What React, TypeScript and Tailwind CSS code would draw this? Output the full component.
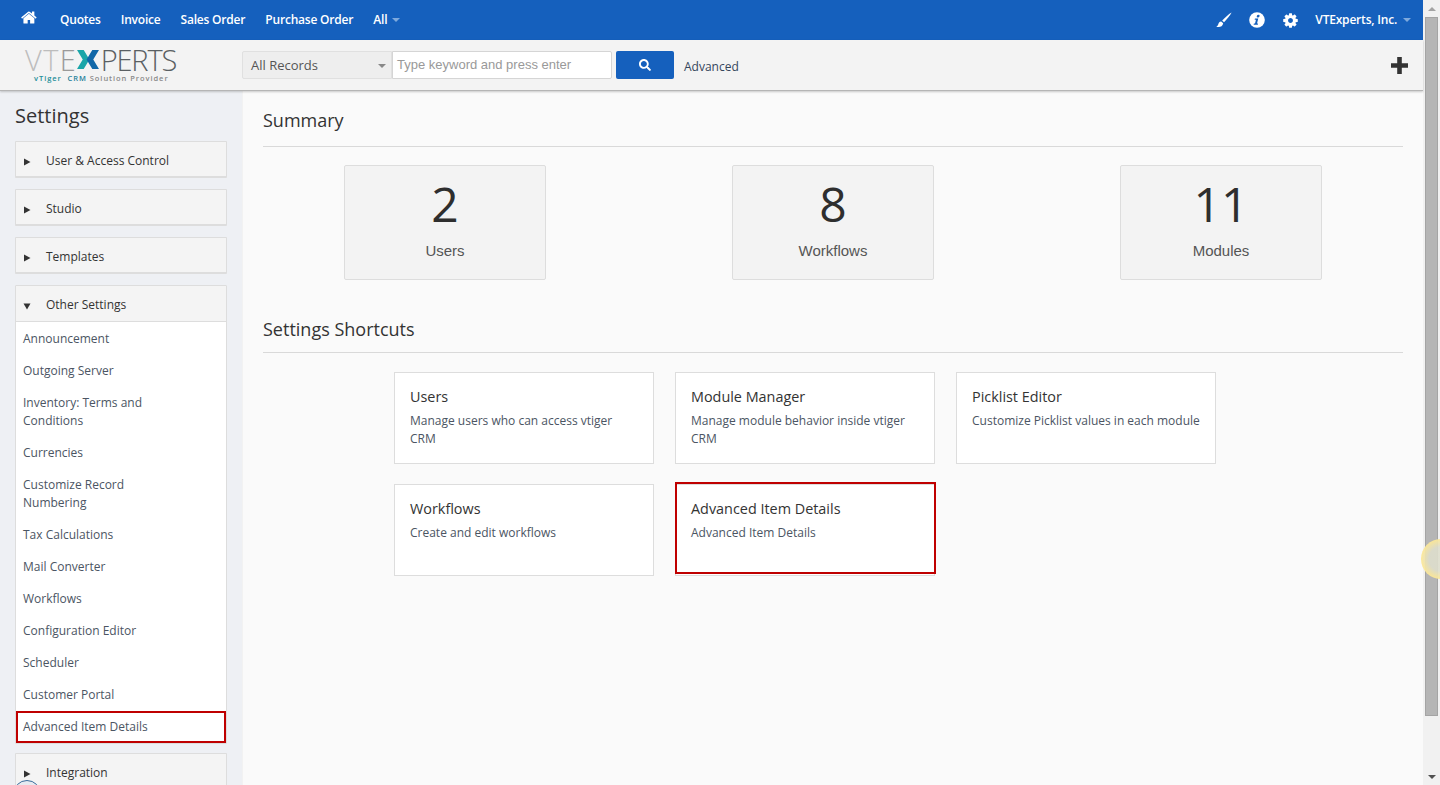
import { FaSearch } from 'react-icons/fa';

const navLinks = ['Quotes', 'Invoice', 'Sales Order', 'Purchase Order'];
const closedTop = ['User & Access Control', 'Studio', 'Templates'];
const otherSettings = [
  'Announcement',
  'Outgoing Server',
  'Inventory: Terms and Conditions',
  'Currencies',
  'Customize Record Numbering',
  'Tax Calculations',
  'Mail Converter',
  'Workflows',
  'Configuration Editor',
  'Scheduler',
  'Customer Portal',
];
const summary = [
  { n: '2', label: 'Users' },
  { n: '8', label: 'Workflows' },
  { n: '11', label: 'Modules' },
];
const shortcuts = [
  { title: 'Users', text: 'Manage users who can access vtiger CRM' },
  { title: 'Module Manager', text: 'Manage module behavior inside vtiger CRM' },
  { title: 'Picklist Editor', text: 'Customize Picklist values in each module' },
  { title: 'Workflows', text: 'Create and edit workflows' },
  { title: 'Advanced Item Details', text: 'Advanced Item Details' },
];

function Caret({ className }: { className: string }) {
  return <span className={`inline-block w-0 h-0 border-x-[4px] border-x-transparent border-t-[4px] ${className}`} />;
}

function HomeIcon() {
  return (
    <svg width="17" height="17" viewBox="0 0 1792 1792" fill="currentColor" className="ml-[21px] mb-[5px]">
      <path d="M1408 992v480q0 26-19 45t-45 19h-384v-384h-256v384h-384q-26 0-45-19t-19-45v-480q0-1 .5-3t.5-3l575-474 575 474q1 2 1 6zm223-69l-62 74q-8 9-21 11h-3q-13 0-21-7l-692-577-692 577q-12 8-24 7-13-2-21-11l-62-74q-8-10-7-23.5t11-21.5l719-599q32-26 76-26t76 26l244 204v-195q0-14 9-23t23-9h192q14 0 23 9t9 23v408l219 182q10 8 11 21.5t-7 23.5z" />
    </svg>
  );
}

function BrushIcon() {
  return (
    <svg width="16" height="16" viewBox="0 0 16 16" fill="currentColor" className="mr-[17px]">
      <path d="M15.6 0.4 C12.5 2.2 8.6 5.6 6.2 8.6 L8 10.2 C10.6 7.6 14 3.6 15.6 0.4 Z" />
      <path d="M5.2 9.4 C3.2 9.6 2.6 11 2.2 12.4 C1.9 13.4 1.2 14 0.2 14.4 C2.4 15.6 6.6 15.2 7.2 11.2 Z" />
    </svg>
  );
}

function InfoIcon() {
  return (
    <svg width="16" height="16" viewBox="0 0 16 16" className="mr-[17px]">
      <circle cx="8" cy="8" r="7.8" fill="#ffffff" />
      <g fill="#1560bd" transform="skewX(-14) translate(2 0)">
        <circle cx="8.2" cy="4.2" r="1.4" />
        <path d="M5.6 6.6 H8.9 V11.6 H10 V12.8 H5.8 V11.6 H6.9 V7.8 H5.6 Z" />
      </g>
    </svg>
  );
}

function CogIcon() {
  return (
    <svg width="17" height="17" viewBox="0 0 1792 1792" fill="currentColor" className="mr-[16px]">
      <path d="M1152 896q0-106-75-181t-181-75-181 75-75 181 75 181 181 75 181-75 75-181zm512-109v222q0 12-8 23t-20 13l-185 28q-19 54-39 91 35 50 107 138 10 12 10 25t-9 23q-27 37-99 108t-94 71q-12 0-26-9l-138-108q-44 23-91 38-16 136-29 186-7 28-36 28h-222q-14 0-24.5-8.5t-11.5-21.5l-28-184q-49-16-90-37l-141 107q-10 9-25 9-14 0-25-11-126-114-165-168-7-10-7-23 0-12 8-23 15-21 51-66.5t54-70.5q-27-50-41-99l-183-27q-13-2-21-12.5t-8-23.5v-222q0-12 8-23t19-13l186-28q14-46 39-92-40-57-107-138-10-12-10-24 0-10 9-23 26-36 98.5-107.5t94.5-71.5q13 0 26 10l138 107q44-23 91-38 16-136 29-186 7-28 36-28h222q14 0 24.5 8.5t11.5 21.5l28 184q49 16 90 37l142-107q9-9 24-9 13 0 25 10 129 119 165 170 7 8 7 22 0 12-8 23-15 21-51 66.5t-54 70.5q26 50 41 98l183 28q13 2 21 12.5t8 23.5z" />
    </svg>
  );
}

function AccordionHead({ label, open }: { label: string; open?: boolean }) {
  return (
    <div className={`flex items-center bg-[#f4f4f4] text-[12px] text-[#333333] ${open ? 'h-[35px] pt-[2px]' : 'h-[34px] pt-[3px]'}`}>
      <span className="w-[8px] ml-[7px] mr-[15px] mt-[3px]">
        {open ? (
          <svg width="8" height="8" viewBox="0 0 8 8"><path d="M0.5 1.5 H7.5 L4 7.5 Z" fill="#333" /></svg>
        ) : (
          <svg width="8" height="8" viewBox="0 0 8 8"><path d="M1 0.5 L7.5 4 L1 7.5 Z" fill="#333" /></svg>
        )}
      </span>
      <span>{label}</span>
    </div>
  );
}

function Logo() {
  return (
    <div className="w-[153px] ml-[25px] flex flex-col">
      <div className="flex items-center h-[25px] text-[29px] leading-[25px] font-light">
        <span className="text-[#bdbdbd] tracking-[1.4px]">VT</span>
        <span className="text-[#9a9a9a] tracking-[0px]">E</span>
        <svg width="24" height="21" viewBox="0 0 23 22" className="shrink-0">
          <polygon points="0,1 7,1 13,11 7,21 0,21 6,11" fill="#1aa5a8" />
          <polygon points="23,1 16,1 10,11 16,21 23,21 17,11" fill="#1268a8" />
        </svg>
        <span className="text-[#5a5f63] tracking-[-1.2px] ml-[1px]">PERTS</span>
      </div>
      <div className="mt-[1px] pl-[9px] text-[7.5px] leading-[10px] font-semibold tracking-[0.95px] whitespace-nowrap">
        <span className="text-[#1d8f99]">vTiger</span>
        <span className="text-[#1d7f99]"> &nbsp;CRM</span>
        <span className="text-[#8a8a8a]"> Solution Provider</span>
      </div>
    </div>
  );
}

export default function App() {
  return (
    <div className="relative flex h-[785px] w-[1440px] overflow-hidden bg-[#fafafa] font-['Open_Sans',sans-serif] text-[#333333]">
      <div className="flex flex-col w-[1423px] h-full">
        {/* top nav */}
        <div className="flex items-center h-[40px] shrink-0 bg-[#1560bd] text-white text-[12px] font-semibold tracking-[-0.2px]">
          <HomeIcon />
          <div className="flex items-center gap-[20px] ml-[22px]">
            {navLinks.map((l) => (
              <span key={l}>{l}</span>
            ))}
            <span className="flex items-center gap-[5px]">
              All
              <Caret className="border-t-[#7ea9dd]" />
            </span>
          </div>
          <div className="flex items-center ml-auto mr-[12px]">
            <BrushIcon />
            <InfoIcon />
            <CogIcon />
            <span className="flex items-center gap-[6px]">
              VTExperts, Inc.
              <Caret className="border-t-[#7ea9dd]" />
            </span>
          </div>
        </div>

        {/* search bar */}
        <div className="relative z-10 flex items-center h-[51px] shrink-0 bg-[#f3f3f3] border-b border-[#b5b5b5] shadow-[0_1px_2px_rgba(0,0,0,0.2)]">
          <Logo />
          <div className="flex items-center ml-[64px] h-[28px] w-[150px] bg-[#eeeeee] border border-[#e0e0e0] rounded-l-[2px] text-[13px] text-[#555555] pl-[8px] pr-[5px] pt-[1px]">
            <span>All Records</span>
            <Caret className="ml-auto border-t-[#888888]" />
          </div>
          <div className="flex items-center h-[28px] w-[220px] bg-white border border-[#d5d5d5] rounded-r-[2px] pl-[4px] text-[13px] text-[#999999] font-['Liberation_Sans',sans-serif]">
            Type keyword and press enter
          </div>
          <div className="flex items-center justify-center ml-[4px] h-[28px] w-[58px] bg-[#1560bd] rounded-[2px] text-white">
            <FaSearch className="text-[12px]" />
          </div>
          <span className="ml-[10px] mt-[3px] text-[12px] text-[#35465c]">Advanced</span>
          <svg width="17" height="17" viewBox="0 0 17 17" fill="#333333" className="ml-auto mr-[15px]">
            <path d="M6.2 0 H10.8 V6.2 H17 V10.8 H10.8 V17 H6.2 V10.8 H0 V6.2 H6.2 Z" />
          </svg>
        </div>

        <div className="flex flex-1 min-h-0">
          {/* sidebar */}
          <div className="w-[243px] shrink-0 bg-[#eef0f4] border-r border-[#f2f2f2] pl-[15px] pr-[15px] overflow-hidden">
            <div className="mt-[10px] h-[30px] text-[20px] leading-[30px] text-[#333333]">Settings</div>
            <div className="flex flex-col gap-[11px] mt-[10px]">
              {closedTop.map((t) => (
                <div key={t} className="border border-[#dddddd] border-b-[2px] rounded-[1px]">
                  <AccordionHead label={t} />
                </div>
              ))}
              <div className="border border-[#dddddd] rounded-[1px]">
                <div className="border-b border-[#dddddd]">
                  <AccordionHead label="Other Settings" open />
                </div>
                <div className="flex flex-col bg-white text-[12px] leading-[18px] text-[#4b5563]">
                  {otherSettings.map((s) => (
                    <div key={s} className="pl-[7px] pr-[50px] pt-[8px] pb-[6px]">
                      {s}
                    </div>
                  ))}
                  <div className="mt-[1px] pl-[5px] py-[5px] border-[2px] border-[#bf0000]">Advanced Item Details</div>
                </div>
              </div>
              <div className="border border-[#dddddd] border-b-[2px] rounded-[1px] -mt-[2px]">
                <AccordionHead label="Integration" />
              </div>
            </div>
          </div>

          {/* main */}
          <div className="flex-1 px-[20px] overflow-hidden">
            <div className="mt-[14px] h-[30px] text-[18px] leading-[30px] text-[#333333]">Summary</div>
            <div className="mt-[11px] border-b border-[#d9d9d9]" />
            <div className="flex gap-[186px] pl-[81px] mt-[18px]">
              {summary.map((c) => (
                <div key={c.label} className="flex flex-col items-center w-[202px] h-[115px] bg-[#f3f3f3] border border-[#dddddd] rounded-[2px]">
                  <div className="mt-[8px] h-[60px] text-[48px] leading-[60px] font-medium text-[#2e2e2e]">{c.n}</div>
                  <div className="mt-[7px] text-[15px] leading-[20px] text-[#555555] font-['Liberation_Sans',sans-serif]">{c.label}</div>
                </div>
              ))}
            </div>
            <div className="mt-[34px] h-[30px] text-[18px] leading-[30px] text-[#333333]">Settings Shortcuts</div>
            <div className="mt-[8px] border-b border-[#d9d9d9]" />
            <div className="grid grid-cols-[260px_260px_260px] gap-x-[21px] gap-y-[20px] pl-[131px] mt-[19px]">
              {shortcuts.map((s) => (
                <div key={s.title} className="relative h-[92px] bg-white border border-[#dddddd] pl-[15px] pr-[13px] pt-[14px]">
                  <div className="text-[14.4px] leading-[20px] text-[#333333]">{s.title}</div>
                  <div className="mt-[5px] text-[12px] leading-[18px] text-[#4b5563]">{s.text}</div>
                  {s.title === 'Advanced Item Details' && (
                    <div className="absolute left-[-1px] top-[-3px] w-[261px] h-[92px] border-[2px] border-[#bf0000]" />
                  )}
                </div>
              ))}
            </div>
          </div>
        </div>
      </div>

      {/* scrollbar */}
      <div className="flex flex-col items-center w-[17px] h-full bg-[#f1f1f1]">
        <div className="flex items-center justify-center h-[17px] w-full">
          <span className="inline-block w-0 h-0 border-x-[4px] border-x-transparent border-b-[4px] border-b-[#a3a3a3]" />
        </div>
        <div className="w-[13px] h-[699px] bg-[#b5b5b5] border border-[#a4a4a4]" />
        <div className="flex items-center justify-center mt-auto h-[17px] w-full">
          <Caret className="border-t-[#505050]" />
        </div>
      </div>

      {/* recorder click markers */}
      <div className="absolute left-[1421px] top-[539px] w-[40px] h-[40px] rounded-full bg-[radial-gradient(circle_closest-side,rgba(222,222,205,0.9)_60%,rgba(253,232,150,0.95)_100%)]" />
      <div className="absolute left-[13px] top-[780px] w-[28px] h-[28px] rounded-full bg-[#e6eaf0] border border-[#3b6d9c]" />
    </div>
  );
}
